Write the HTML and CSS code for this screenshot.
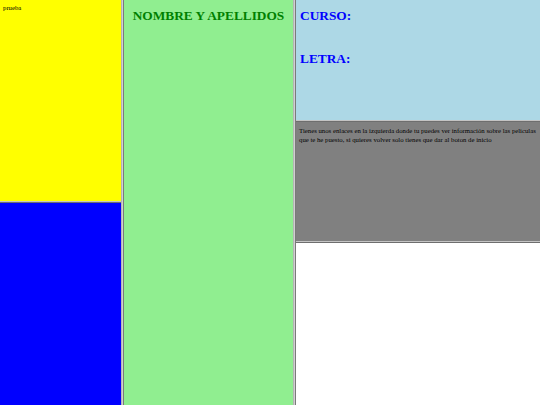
FILE: index.html
```html
<!DOCTYPE html>
<html>
<head>
<meta charset="utf-8">
<link rel="stylesheet" href="styles.css">
</head>
<body>
<div class="frameset">
  <div class="col col-left">
    <div class="pane yellow"><div class="doc top">prueba</div></div>
    <div class="hborder"></div>
    <div class="pane blue fill"></div>
  </div>
  <div class="vborder"></div>
  <div class="col col-mid">
    <div class="pane green fill">
      <h2 class="title">NOMBRE Y APELLIDOS</h2>
    </div>
  </div>
  <div class="vborder"></div>
  <div class="col col-right">
    <div class="pane lightblue">
      <h2 class="label first">CURSO:</h2>
      <h2 class="label">LETRA:</h2>
    </div>
    <div class="hborder"></div>
    <div class="pane gray">
      <div class="doc">Tienes unos enlaces en la izquierda donde tu puedes ver información sobre las peliculas que te he puesto, si quieres volver solo tienes que dar al boton de inicio</div>
    </div>
    <div class="hborder"></div>
    <div class="pane white fill"></div>
  </div>
</div>
</body>
</html>
```
FILE: styles.css
```css
html, body {
  margin: 0;
  padding: 0;
  width: 540px;
  height: 405px;
  overflow: hidden;
}
body {
  font-family: "Liberation Serif", "Times New Roman", serif;
}
.frameset {
  display: flex;
  width: 540px;
  height: 405px;
}
.col {
  display: flex;
  flex-direction: column;
  height: 405px;
}
.col-left { width: 121px; }
.col-mid { width: 169px; }
.col-right { width: 244px; }
.vborder {
  width: 3px;
  height: 405px;
  background: linear-gradient(to right, #b4b4b4 0, #b4b4b4 1px, #d0d0d0 1px, #d0d0d0 2px, #7a7a7a 2px);
}
.hborder {
  height: 2px;
  background: linear-gradient(to bottom, #c4c4c4 0, #c4c4c4 1px, #6e6e6e 1px);
}
.pane { overflow: hidden; }
.fill { flex: 1; }
.yellow { background: #ffff00; height: 201px; }
.blue { background: #0000ff; }
.green { background: #90ee90; }
.lightblue { background: #add8e6; height: 120px; }
.gray { background: #808080; height: 119px; }
.white { background: #ffffff; }
.doc {
  margin: 5px 4px 0 3px;
  font-size: 6.75px;
  line-height: 8.5px;
  color: #000;
}
.doc.top {
  margin-top: 4px;
}
.title {
  margin: 8px 0 0;
  text-align: center;
  font-size: 13.33px;
  line-height: 15px;
  color: #008000;
}
.label {
  margin: 28px 0 0 4px;
  font-size: 13.33px;
  line-height: 15px;
  color: #0000ff;
}
.label.first {
  margin-top: 8px;
}
```
